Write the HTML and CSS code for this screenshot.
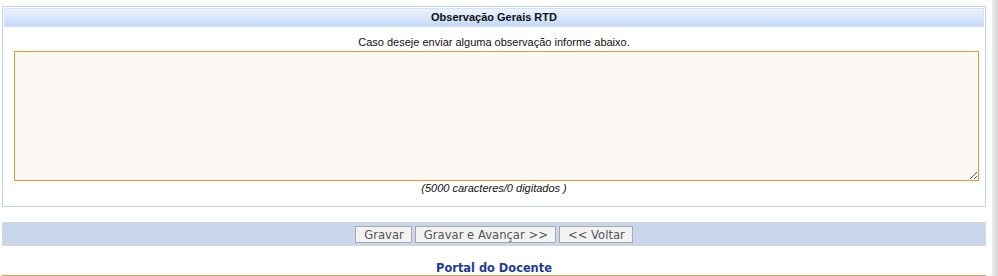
FILE: index.html
```html
<!DOCTYPE html>
<html lang="pt-BR">
<head>
    <meta charset="UTF-8">
    <title>Observação Gerais RTD</title>
    <link rel="stylesheet" href="styles.css">
</head>
<body>
    <div class="page">
        <div class="formBox">
            <div class="caption">Observação Gerais RTD</div>
            <div class="hint">Caso deseje enviar alguma observação informe abaixo.</div>
            <div class="areaWrap">
                <textarea class="obs" autofocus></textarea>
            </div>
            <div class="counter">(5000 caracteres/0 digitados )</div>
        </div>

        <div class="buttonBar">
            <button>Gravar</button>
            <button>Gravar e Avançar &gt;&gt;</button>
            <button>&lt;&lt; Voltar</button>
        </div>

        <div class="footer">Portal do Docente</div>
    </div>
</body>
</html>
```

FILE: styles.css
```css
html, body {
    margin: 0;
    height: 100%;
}
body {
    font-family: "Liberation Sans", Arial, sans-serif;
    font-size: 11px;
    color: #111;
    background: linear-gradient(to right, #fff 992px, #ececec 992px, #d6d6d6 998px);
    overflow: hidden;
}
.page {
    width: 984px;
    padding: 6px 0 0 2px;
}
.formBox {
    border: 1px solid #bcd5f7;
    padding: 1px 1px 0 1px;
    height: 198px;
}
.caption {
    height: 17px;
    line-height: 17px;
    border: 1px solid #d2e2fb;
    background: linear-gradient(#eef4ff, #c3d9f8);
    text-align: center;
    font-weight: bold;
    color: #111;
}
.hint {
    text-align: center;
    margin-top: 8px;
    line-height: 14px;
}
.areaWrap {
    padding: 2px 5px 0 10px;
}
.obs {
    display: block;
    width: 100%;
    height: 130px;
    box-sizing: border-box;
    margin: 0;
    border: 1px solid #e29b34;
    background: #fcf9f4;
    resize: vertical;
    outline: none;
    font-family: "Liberation Sans", Arial, sans-serif;
    font-size: 11px;
}
.counter {
    text-align: center;
    font-style: italic;
    margin-top: 0;
    line-height: 14px;
}
.buttonBar {
    margin-top: 15px;
    border: 1px solid #d9d9d9;
    background: #c9d6ec;
    text-align: center;
    padding-top: 3px;
    box-sizing: border-box;
    height: 24px;
}
.buttonBar button {
    font-family: "DejaVu Sans", Verdana, sans-serif;
    font-size: 11.6px;
    color: #555;
    background: #f3f3f3;
    border: 1px solid #a9a9a9;
    height: 17px;
    line-height: 14px;
    padding: 0 7px 0 8px;
    margin: 0;
    vertical-align: top;
}
.footer {
    margin-top: 15px;
    text-align: center;
    font-family: "DejaVu Sans", Verdana, sans-serif;
    font-weight: bold;
    font-size: 11.4px;
    color: #1d3a9a;
    line-height: 14px;
    border-bottom: 1px solid #e0a050;
}
```
